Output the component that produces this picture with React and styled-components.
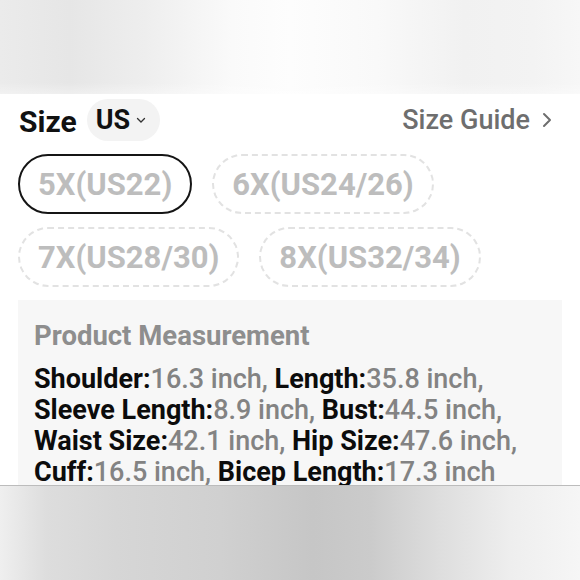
import React from "react";
import styled, { createGlobalStyle } from "styled-components";

const GlobalStyle = createGlobalStyle`
  html, body {
    margin: 0;
    padding: 0;
    background: #ffffff;
  }
  body {
    font-family: Roboto, "Liberation Sans", Arial, sans-serif;
  }
`;

const Page = styled.div`
  width: 580px;
  height: 580px;
  display: flex;
  flex-direction: column;
  overflow: hidden;
`;

const TopBlur = styled.div`
  height: 94px;
  flex: none;
  background:
    linear-gradient(to bottom, rgba(255,255,255,0) 0%, rgba(255,255,255,0) 88%, rgba(255,255,255,0.35) 100%),
    linear-gradient(to right, #ebebeb 0%, #e6e6e6 12%, #eeeeee 25%, #fafafa 40%, #fdfdfd 50%, #f9f9f9 65%, #f1f1f1 80%, #f3f3f3 92%, #f7f7f7 100%);
`;

const BottomBlur = styled.div`
  height: 94px;
  flex: none;
  border-top: 1px solid #bcbcbc;
  background: linear-gradient(to right, #efefef 0%, #dddddd 8%, #d6d6d6 20%, #d0d0d0 38%, #c6c6c6 54%, #cbcbcb 64%, #dedede 76%, #eeeeee 88%, #f6f6f6 100%);
`;

const Content = styled.div`
  flex: 1;
  background: #ffffff;
  overflow: hidden;
  padding: 5px 18px 0 18px;
  display: flex;
  flex-direction: column;
  gap: 13px;
`;

const Header = styled.div`
  height: 42px;
  display: flex;
  align-items: center;
  justify-content: space-between;
`;

const HeaderLeft = styled.div`
  display: flex;
  align-items: center;
  gap: 10px;
`;

const Title = styled.div`
  font-size: 30px;
  font-weight: 700;
  color: #111111;
  padding-left: 1px;
  padding-top: 2px;
`;

const RegionPill = styled.div`
  height: 42px;
  border-radius: 21px;
  background: #f3f3f3;
  display: flex;
  align-items: center;
  gap: 6px;
  padding: 0 14px 0 9px;
  font-size: 27px;
  font-weight: 700;
  color: #111111;
`;

const GuideLink = styled.div`
  display: flex;
  align-items: center;
  gap: 12px;
  font-size: 27px;
  font-weight: 500;
  color: #6e6e6e;
  padding-right: 10px;
`;

const ChipRow = styled.div`
  display: flex;
  gap: 20px;
`;

const Chip = styled.div`
  box-sizing: border-box;
  height: 60px;
  border-radius: 30px;
  padding: 0 18px;
  display: flex;
  align-items: center;
  font-size: 31px;
  font-weight: 700;
  color: #bdbdbd;
  border: ${(props) => (props.selected ? "2px solid #151515" : "2px dashed #e2e2e2")};
`;

const MeasureBox = styled.div`
  background: #f7f7f7;
  padding: 20px 16px 0 16px;
  flex: 1;
`;

const MeasureTitle = styled.div`
  font-size: 27.5px;
  line-height: 31px;
  font-weight: 700;
  color: #8e8e8e;
  margin-bottom: 13px;
`;

const MeasureLine = styled.div`
  font-size: 27px;
  line-height: 31px;
  font-weight: 700;
  color: #0c0c0c;
  white-space: nowrap;
`;

const Value = styled.span`
  color: #838383;
  font-weight: 500;
`;

const SmallChevron = () => (
  <svg width="10" height="8" viewBox="0 0 10 8">
    <path d="M1.5 2.5 L5 6 L8.5 2.5" fill="none" stroke="#333" strokeWidth="1.3" strokeLinecap="round" />
  </svg>
);

const RightChevron = () => (
  <svg width="10" height="16" viewBox="0 0 10 16">
    <path d="M2 2 L8 8 L2 14" fill="none" stroke="#6e6e6e" strokeWidth="2" strokeLinecap="round" strokeLinejoin="round" />
  </svg>
);

const sizes = [
  ["5X(US22)", "6X(US24/26)"],
  ["7X(US28/30)", "8X(US32/34)"],
];

const lines = [
  [["Shoulder", "16.3 inch"], ["Length", "35.8 inch"]],
  [["Sleeve Length", "8.9 inch"], ["Bust", "44.5 inch"]],
  [["Waist Size", "42.1 inch"], ["Hip Size", "47.6 inch"]],
  [["Cuff", "16.5 inch"], ["Bicep Length", "17.3 inch"]],
];

export default function App() {
  return (
    <Page>
      <GlobalStyle />
      <TopBlur />
      <Content>
        <Header>
          <HeaderLeft>
            <Title>Size</Title>
            <RegionPill>
              US
              <SmallChevron />
            </RegionPill>
          </HeaderLeft>
          <GuideLink>
            Size Guide
            <RightChevron />
          </GuideLink>
        </Header>
        {sizes.map((row, i) => (
          <ChipRow key={i}>
            {row.map((s) => (
              <Chip key={s} selected={s === "5X(US22)"}>
                {s}
              </Chip>
            ))}
          </ChipRow>
        ))}
        <MeasureBox>
          <MeasureTitle>Product Measurement</MeasureTitle>
          {lines.map((line, i) => (
            <MeasureLine key={i}>
              {line.map(([label, val], j) => (
                <React.Fragment key={label}>
                  {label}:<Value>{val}{j === 0 || i < lines.length - 1 ? "," : ""}</Value>
                  {j === 0 ? " " : ""}
                </React.Fragment>
              ))}
            </MeasureLine>
          ))}
        </MeasureBox>
      </Content>
      <BottomBlur />
    </Page>
  );
}
